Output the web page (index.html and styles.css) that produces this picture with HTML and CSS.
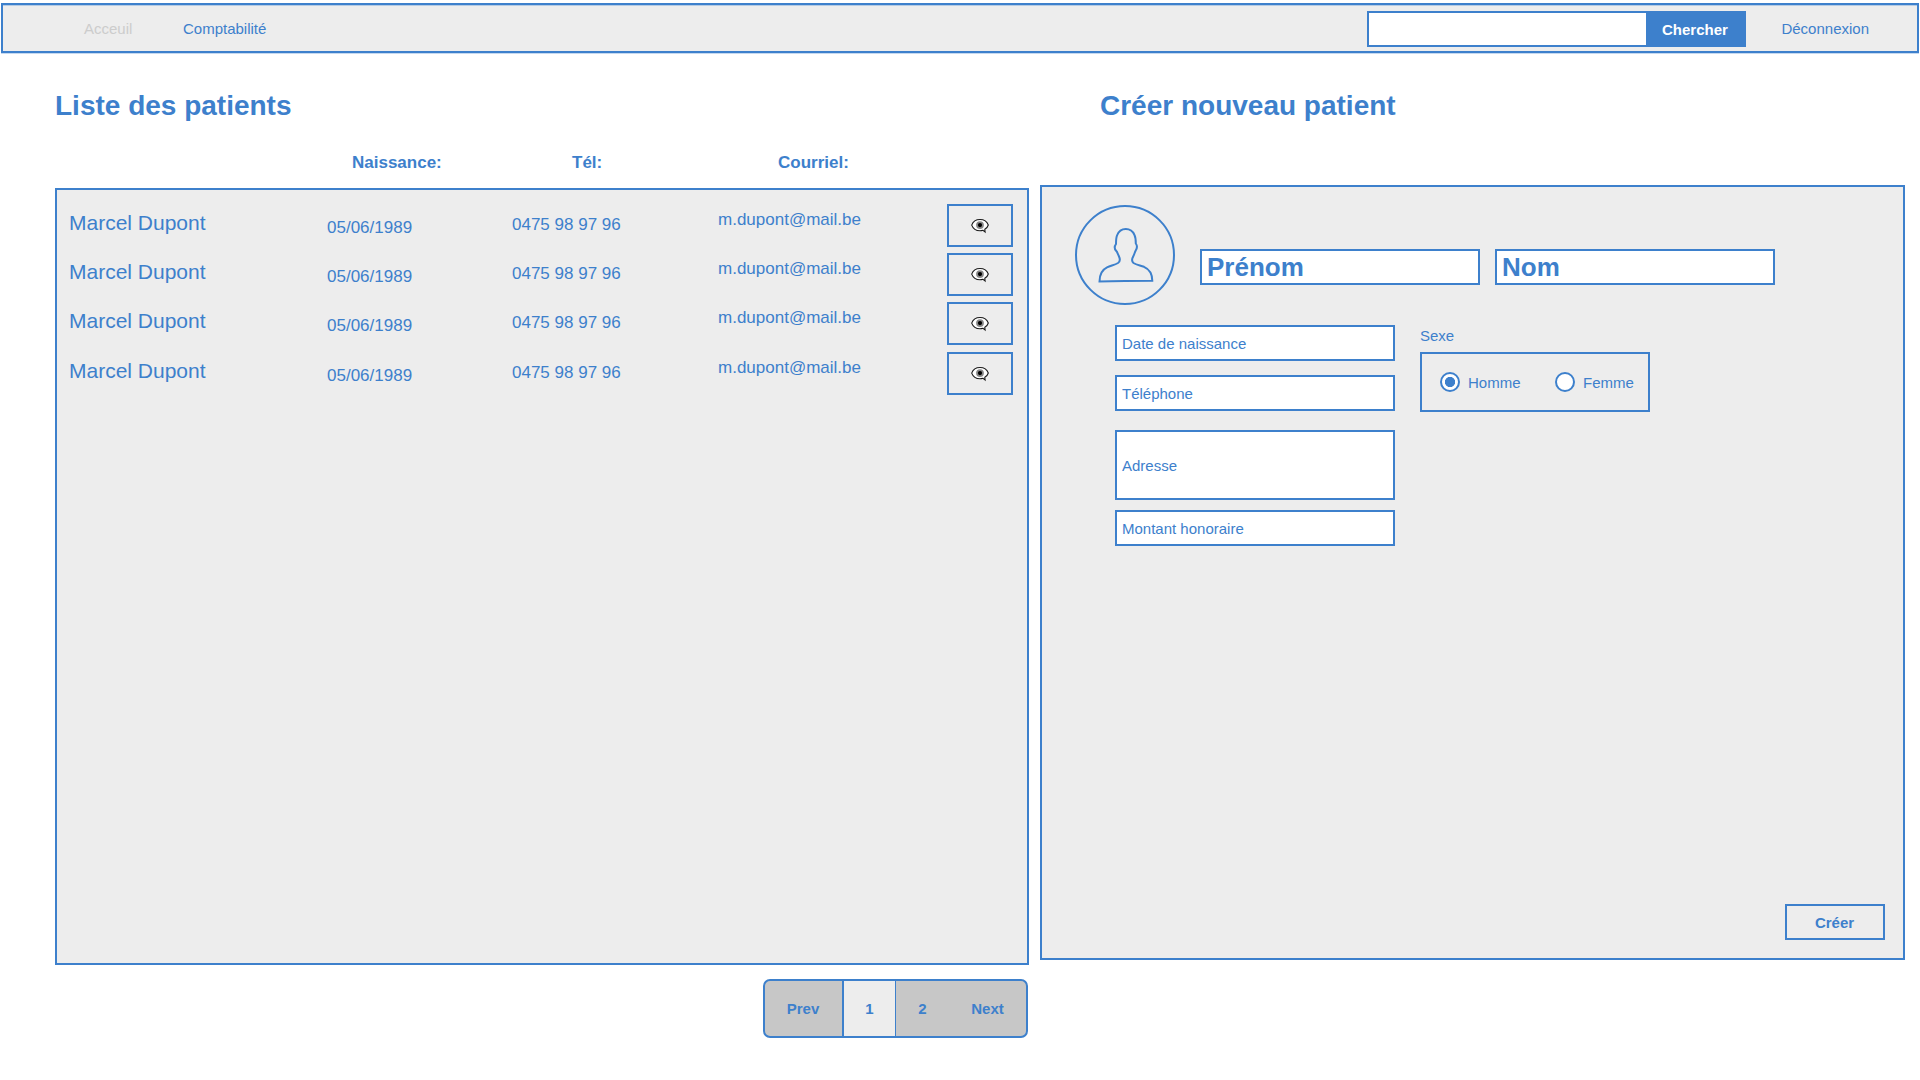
FILE: index.html
```html
<!DOCTYPE html>
<html lang="fr">
<head>
<meta charset="utf-8">
<title>Patients</title>
<link rel="stylesheet" href="styles.css">
</head>
<body>
<svg class="defs" width="0" height="0">
  <symbol id="eye" viewBox="0 0 18 16">
    <path d="M9 1.500 C12.500 1.500 16 3.500 17.300 7 C16.700 8.900 15.400 10.400 13.800 11.300 L14.100 14 L12 12.300 C11 12.600 10 12.800 9 12.800 C5.500 12.800 2.100 10.800 0.700 7.100 C2.100 3.300 5.500 1.500 9 1.500 Z" fill="#fff" stroke="#1a1a1a" stroke-width="1.100"/>
    <circle cx="9" cy="7.100" r="3.900" fill="#888"/>
    <circle cx="9" cy="7.100" r="2.100" fill="#000"/>
  </symbol>
</svg>
<nav class="navbar">
  <a class="link active">Acceuil</a>
  <a class="link">Comptabilité</a>
  <form class="search">
    <input class="search-input" type="text" aria-label="Chercher">
    <button class="search-button" type="button">Chercher</button>
  </form>
  <a class="link">Déconnexion</a>
</nav>
<main class="content">
  <section class="patients">
    <h1 class="title">Liste des patients</h1>
    <div class="headings">
      <span>Naissance:</span><span>Tél:</span><span>Courriel:</span>
    </div>
    <div class="panel list">
      <div class="row"><span class="name">Marcel Dupont</span><span class="birth">05/06/1989</span><span class="phone">0475 98 97 96</span><span class="mail">m.dupont@mail.be</span><button class="view" aria-label="Voir"><svg><use href="#eye"/></svg></button></div>
      <div class="row"><span class="name">Marcel Dupont</span><span class="birth">05/06/1989</span><span class="phone">0475 98 97 96</span><span class="mail">m.dupont@mail.be</span><button class="view" aria-label="Voir"><svg><use href="#eye"/></svg></button></div>
      <div class="row"><span class="name">Marcel Dupont</span><span class="birth">05/06/1989</span><span class="phone">0475 98 97 96</span><span class="mail">m.dupont@mail.be</span><button class="view" aria-label="Voir"><svg><use href="#eye"/></svg></button></div>
      <div class="row"><span class="name">Marcel Dupont</span><span class="birth">05/06/1989</span><span class="phone">0475 98 97 96</span><span class="mail">m.dupont@mail.be</span><button class="view" aria-label="Voir"><svg><use href="#eye"/></svg></button></div>
    </div>
    <div class="pagination">
      <a class="page prev">Prev</a><a class="page current">1</a><a class="page">2</a><a class="page next">Next</a>
    </div>
  </section>
  <section class="create">
    <h1 class="title">Créer nouveau patient</h1>
    <form class="panel form">
      <div class="identity">
        <svg class="avatar" width="100" height="100" viewBox="0 0 100 100">
          <circle cx="50" cy="50" r="49"/>
          <path d="M24.500 76.500 C24.500 69 27.500 64.500 32 62.300 C36 60.500 39.500 60 43 58 C45.300 56.500 45 53.500 43.800 51 C42.500 48.300 42.300 47 41.300 46 C39.500 44 39.300 41.300 41 39 C41 36 41 33 42 30.500 C43.500 26.500 47 24 50.800 24 C54.600 24 58 26.500 59.500 30 C60.700 32.500 60.800 36 60.800 38.500 C62.300 40.500 62 43.500 60.700 45.500 C59.800 47 59.500 49 58.300 51.200 C57 53.500 56.700 56.500 58.500 58 C61.500 60 65 60.300 69 61.800 C74 64 77.300 68.500 77.300 75.800 L50 75.900 L36 76.300 Z"/>
        </svg>
        <div class="names">
          <input class="field big" type="text" placeholder="Prénom">
          <input class="field big" type="text" placeholder="Nom">
        </div>
      </div>
      <div class="details">
        <div class="fields">
          <input class="field" type="text" placeholder="Date de naissance">
          <input class="field" type="text" placeholder="Téléphone">
          <input class="field address" type="text" placeholder="Adresse">
          <input class="field" type="text" placeholder="Montant honoraire">
        </div>
        <div class="sex">
          <span class="legend">Sexe</span>
          <div class="choices">
            <label class="choice"><i class="radio checked"></i>Homme</label>
            <label class="choice"><i class="radio"></i>Femme</label>
          </div>
        </div>
      </div>
      <button class="submit" type="button">Créer</button>
    </form>
  </section>
</main>
</body>
</html>
```

FILE: styles.css
```css
* { box-sizing: border-box; }
body {
  margin: 0;
  padding: 3px 1px 0;
  height: 1080px;
  overflow: hidden;
  background: #fff;
  color: #3d80cc;
  font: 15px/17px "Liberation Sans", Arial, sans-serif;
}
button, input { margin: 0; font: inherit; color: inherit; border-radius: 0; }
.defs { position: absolute; }

.navbar {
  display: flex;
  align-items: center;
  height: 50px;
  padding: 1px 48px 0 81px;
  background: #ededed;
  border: 2px solid #3d80cc;
  box-shadow: inset 0 1px 0 #b5cbe4, 0 1px 0 #c5d9f0;
}
.link { width: 99px; }
.link:last-child { width: auto; margin-left: 35px; }
.active { color: #ccc; }
.search { display: flex; margin: 1px 0 0 auto; }
.search-input { width: 279px; height: 36px; background: #fff; border: 2px solid #3d80cc; border-right: 0; }
.search-button { width: 100px; height: 36px; padding: 0 3px 0 0; border: 0; background: #3d80cc; color: #fff; font-weight: bold; }

.content { display: flex; gap: 11px; padding: 37px 0 0 54px; }
.title { margin: 0; font-size: 28px; line-height: 32px; }
.patients { width: 974px; }
.create { width: 865px; }
.create .title { padding-left: 60px; margin-bottom: 63px; }
.panel { background: #ededed; border: 2px solid #3d80cc; }

.headings {
  display: grid;
  grid-template-columns: 220px 206px auto;
  padding: 31px 0 15px 297px;
  font-size: 17px;
  line-height: 20px;
  font-weight: bold;
}
.list { height: 777px; padding: 14px 14px 0 12px; }
.row {
  display: grid;
  grid-template-columns: 258px 185px 206px 1fr 66px;
  height: 43px;
  margin-bottom: 6px;
  font-size: 17px;
  line-height: 20px;
}
.row:nth-child(4) { margin-top: 7px; }
.name { font-size: 21px; line-height: 24px; padding-top: 7px; }
.birth { padding-top: 14px; }
.phone { padding-top: 11px; }
.mail { padding-top: 6px; }
.view { display: flex; align-items: center; justify-content: center; padding: 1px 0 0; background: none; border: 2px solid #3d80cc; }
.view svg { width: 18px; height: 16px; }

.pagination {
  display: flex;
  width: 265px;
  height: 59px;
  margin: 14px 1px 0 auto;
  overflow: hidden;
  background: #c7c7c7;
  border: 2px solid #3d80cc;
  border-radius: 7px;
  font-weight: bold;
}
.page { display: flex; align-items: center; justify-content: center; width: 53px; }
.prev { width: 77px; padding-right: 1px; }
.current { width: 54px; background: #ededed; border: solid #3d80cc; border-width: 0 1px 0 2px; }
.next { flex: 1; }

.form { display: flex; flex-direction: column; height: 775px; padding: 18px 18px 18px 33px; }
.identity { display: flex; gap: 25px; }
.avatar { fill: none; stroke: #3d80cc; stroke-width: 2; }
.names { display: flex; gap: 15px; padding-top: 44px; }
.field { width: 280px; height: 36px; padding: 0 5px; background: #fff; border: 2px solid #3d80cc; }
.field::placeholder { color: inherit; opacity: 1; }
.big { font-size: 26px; font-weight: bold; line-height: 30px; }
.details { display: flex; gap: 25px; padding: 20px 0 0 40px; }
.fields { display: flex; flex-direction: column; }
.fields .field:nth-child(2) { margin: 14px 0 19px; }
.fields .address { height: 70px; margin-bottom: 10px; }
.sex { padding-top: 2px; }
.legend { display: block; height: 25px; }
.choices { display: flex; width: 230px; height: 60px; align-items: center; padding-left: 18px; border: 2px solid #3d80cc; }
.choice { display: flex; align-items: center; gap: 8px; flex: 0 0 115px; }
.choice:last-child { flex-basis: auto; }
.radio { width: 20px; height: 20px; border: 2px solid #3d80cc; border-radius: 50%; background: #fff; }
.checked { background: radial-gradient(circle, #3d80cc 4.800px, #fff 5.400px); }
.submit { width: 100px; height: 36px; margin: auto 0 0 auto; padding: 0 1px 0 0; background: none; border: 2px solid #3d80cc; font-weight: bold; }
```
